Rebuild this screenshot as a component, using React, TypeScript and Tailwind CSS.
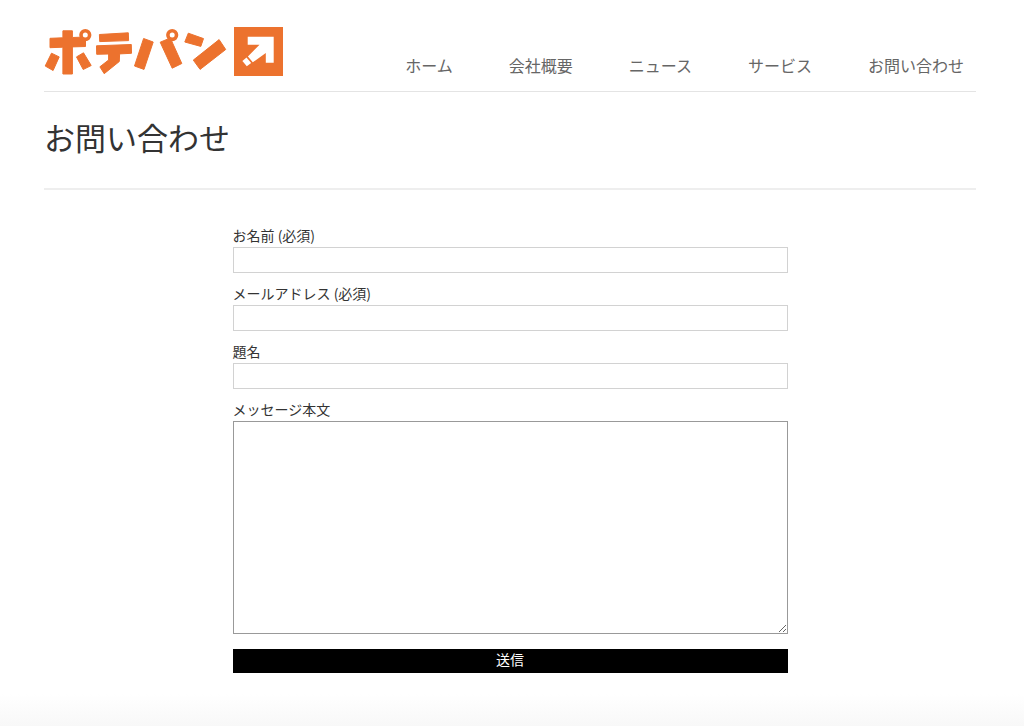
import { useState } from "react";

const NAV_ITEMS = ["ホーム", "会社概要", "ニュース", "サービス", "お問い合わせ"];

const FIELDS = [
  { id: "name", label: "お名前 (必須)", type: "text", required: true },
  { id: "email", label: "メールアドレス (必須)", type: "email", required: true },
  { id: "subject", label: "題名", type: "text", required: false },
];

function Logo() {
  return (
    <svg
      viewBox="44 27 239 49"
      className="h-[49px] w-[239px]"
      fill="#ec722e"
      stroke="#ec722e"
      strokeLinejoin="round"
      role="img"
      aria-label="ポテパン"
    >
      {/* ポ */}
      <path d="M50 38.3 62.9 37.8V30.8H72.4V37.5L85.5 37V46.5L72.4 46.9V74H62.9V47.2L50 47.7Z" />
      <path d="M51.5 53.2 59.2 56.9 53.1 70.5 45.2 66Z" />
      <path d="M76.5 56.9 83.5 52.8 91.2 65.5 83.2 69.5Z" />
      <circle cx="85.3" cy="35.1" r="4.3" fill="#fff" strokeWidth="3.6" />
      {/* テ */}
      <path d="M99.4 34.5 128.3 32.8 128.6 40.6 99.7 41.6Z" />
      <path d="M96.5 45.8 131.3 44.5 131.5 53.3 119.6 53.9 119.3 61.5 104.2 73.7 99.9 66.8 108.6 60V54L96.7 54.3Z" />
      {/* パ */}
      <path d="M143.6 38.5 153.2 42 144 69.4 134.5 66Z" />
      <path d="M160.2 42.2 170.3 38 181.8 63.5 172.2 68.2Z" />
      <circle cx="172.2" cy="35.1" r="4.3" fill="#fff" strokeWidth="3.6" />
      {/* ン */}
      <path d="M188.3 33.2 203.5 38.6 200.8 46.4 184.8 42Z" />
      <path d="M219.1 39.6 225.7 49.5 200.1 69.4 193.3 60.1Z" />
      {/* 矢印 */}
      <path stroke="none" d="M234 27H283V76H234Z" />
      <path
        fill="#fff"
        stroke="none"
        d="M247.7 36.7H273.7V62.7H265.8V53L252.8 62.3 247.9 56.6 259.5 44.7H247.7Z"
      />
      <path
        fill="#fff"
        stroke="none"
        d="M246.5 57.6 251.2 63.1 246.8 66.3 242.4 60.9Z"
      />
    </svg>
  );
}

export default function App() {
  const [values, setValues] = useState<Record<string, string>>({});

  const handleChange = (id: string, value: string) => {
    setValues((prev) => ({ ...prev, [id]: value }));
  };

  return (
    <div className="flex min-h-screen flex-col bg-white font-['Noto_Sans_CJK_JP',sans-serif] text-[#333]">
      <div className="pr-12 pl-11">
        <header className="flex items-end justify-between border-b border-[#e4e4e4] pt-[27px] pb-[15px]">
          <a href="#">
            <Logo />
          </a>
          <nav>
            <ul className="flex gap-14 pr-3 text-base leading-[22px] text-[#666]">
              {NAV_ITEMS.map((item) => (
                <li key={item}>
                  <a href="#" className="hover:underline">
                    {item}
                  </a>
                </li>
              ))}
            </ul>
          </nav>
        </header>

        <div className="border-b-2 border-[#eee] pt-6 pb-[30px]">
          <h1 className="text-[31px] leading-[42px] font-normal">お問い合わせ</h1>
        </div>

        <form
          className="mx-auto w-full max-w-[555px] pt-[35px] text-sm leading-5"
          onSubmit={(e) => e.preventDefault()}
        >
          {FIELDS.map((field) => (
            <div key={field.id} className="mb-2.5">
              <label htmlFor={field.id} className="block pb-0.5">
                {field.label}
              </label>
              <input
                id={field.id}
                type={field.type}
                required={field.required}
                value={values[field.id] ?? ""}
                onChange={(e) => handleChange(field.id, e.target.value)}
                className="block h-[26px] w-full border border-[#d2d2d2] bg-white px-1"
              />
            </div>
          ))}
          <label htmlFor="message" className="block pb-0.5">
            メッセージ本文
          </label>
          <textarea
            id="message"
            value={values.message ?? ""}
            onChange={(e) => handleChange("message", e.target.value)}
            className="block h-[213px] w-full border border-[#999] bg-white p-1"
          />
          <button type="submit" className="mt-[15px] block h-6 w-full bg-black pb-1 text-white">
            送信
          </button>
        </form>
      </div>
      <div className="mt-auto h-8 bg-linear-to-b from-white to-[#f8f8f8]" />
    </div>
  );
}
